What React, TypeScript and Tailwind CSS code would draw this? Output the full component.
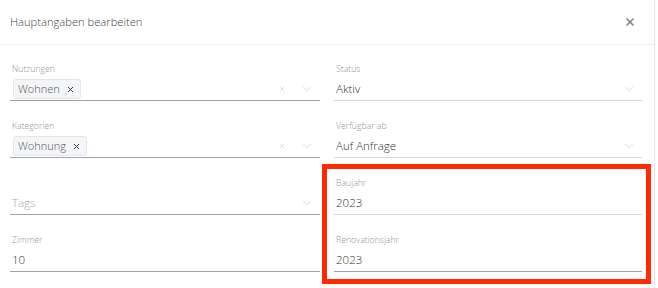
import { X, ChevronDown } from 'lucide-react';

const font = { fontFamily: '"Open Sans", "Noto Sans", sans-serif' };

function Chip({ label }: { label: string }) {
    return (
        <span className="ml-[3px] flex h-[20px] items-center gap-[6px] rounded-[3px] border border-[#e3e5e9] bg-[#f4f5f7] pl-[4px] pr-[5px] text-[11px] font-light text-[#555]">
            {label}
            <X size={9} strokeWidth={2.6} className="text-[#333]" />
        </span>
    );
}

function Field({
    label,
    children,
    line = 'border-[#9aa3b2]',
    clear = false,
    chevron = false,
}: {
    label?: string;
    children?: React.ReactNode;
    line?: string;
    clear?: boolean;
    chevron?: boolean;
}) {
    return (
        <div className="flex flex-col">
            <div className="h-[18px] pl-[2px] text-[8.7px] font-light leading-[18px] text-[#8f939a]">{label}</div>
            <div className={`flex h-[23px] items-center border-b ${line}`}>
                <div className="flex flex-1 items-center">{children}</div>
                {clear && <X size={8} strokeWidth={1.5} className="mr-[14px] text-[#c4c4c4]" />}
                {chevron && <ChevronDown size={14} strokeWidth={1} className="mr-[6px] text-[#b9bcc2]" />}
            </div>
        </div>
    );
}

function Value({ children, muted = false }: { children: React.ReactNode; muted?: boolean }) {
    return (
        <span className={`pl-[2px] text-[11.5px] font-light ${muted ? 'text-[#a9a9a9]' : 'text-[#333]'}`}>{children}</span>
    );
}

export default function App() {
    return (
        <div className="relative flex h-[288px] w-[658px] overflow-hidden bg-white" style={font}>
            <div className="flex w-[655px] flex-col border-r border-[#e4e6ea]">
                {/* Header */}
                <div className="flex h-[45px] items-center justify-between border-b border-[#eeeeee] pl-[10px] pr-[18px]">
                    <span className="text-[11.2px] font-light text-[#3f3f3f]">Hauptangaben bearbeiten</span>
                    <X size={12} strokeWidth={3.4} className="text-[#858585]" />
                </div>

                {/* Body */}
                <div className="grid grid-cols-[310px_308px] gap-x-[14px] gap-y-[16px] pl-[10px] pt-[15px]">
                    <Field label="Nutzungen" clear chevron>
                        <Chip label="Wohnen" />
                    </Field>
                    <Field label="Status" line="border-[#d3d7de]" chevron>
                        <Value>Aktiv</Value>
                    </Field>

                    <Field label="Kategorien" clear chevron>
                        <Chip label="Wohnung" />
                    </Field>
                    <Field label="Verfügbar ab" line="border-[#d3d7de]" chevron>
                        <Value>Auf Anfrage</Value>
                    </Field>

                    <Field chevron>
                        <Value muted>Tags</Value>
                    </Field>
                    <Field label="Baujahr" line="border-[#d3d7de]">
                        <Value>2023</Value>
                    </Field>

                    <Field label="Zimmer">
                        <Value>10</Value>
                    </Field>
                    <Field label="Renovationsjahr">
                        <Value>2023</Value>
                    </Field>
                </div>
            </div>

            {/* Annotation box */}
            <div className="absolute left-[322px] top-[164px] h-[120px] w-[329px] border-[5px] border-[#ff2a00]" />
        </div>
    );
}
